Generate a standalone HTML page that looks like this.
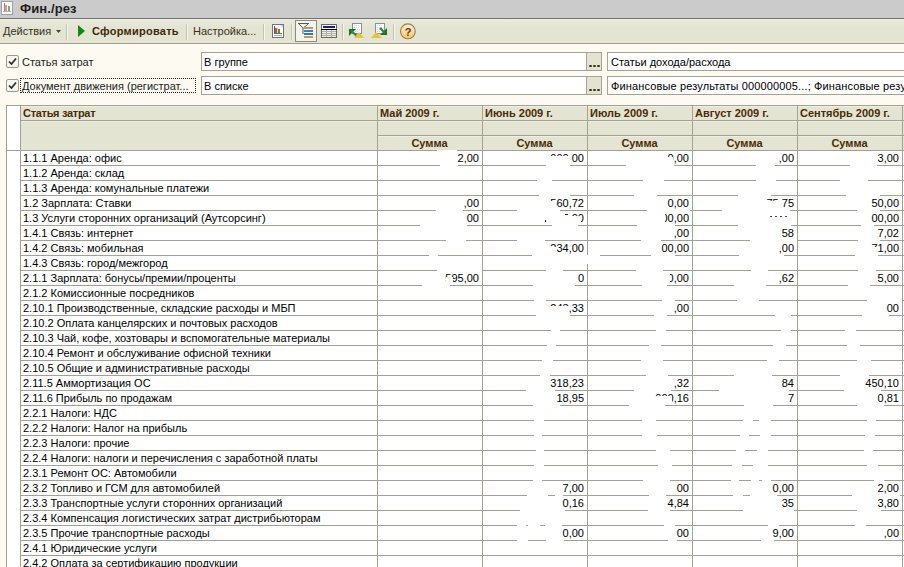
<!DOCTYPE html>
<html><head><meta charset="utf-8"><style>
*{margin:0;padding:0;box-sizing:border-box}
html,body{width:904px;height:567px;overflow:hidden;background:#fcfaf1;font-family:"Liberation Sans",sans-serif;font-size:11px;color:#000}
.a{position:absolute}
.t{position:absolute;white-space:nowrap;line-height:15px}
.hl{position:absolute;height:1px;background:#a3a294}
.vl{position:absolute;width:1px;background:#a3a294}
.hd{font-weight:bold;color:#4a2c06}
</style></head><body>

<div class="a" style="left:0;top:0;width:904px;height:18px;background:#cbcbcb"></div>
<div class="a" style="left:0;top:18px;width:904px;height:1px;background:#74746c"></div>
<svg class="a" style="left:0;top:0" width="16" height="17" viewBox="0 0 16 17"><rect x="1.5" y="1.5" width="11" height="13" fill="#f6fbf8" stroke="#98a4ac"/><rect x="4" y="3" width="1" height="8" fill="#b87878"/><rect x="5" y="5" width="2" height="6" fill="#e09898"/><rect x="8" y="6" width="2" height="5" fill="#70b080"/><rect x="3" y="11" width="8" height="1" fill="#d0a0a0"/></svg>
<div class="t" style="left:20px;top:1px;font-weight:bold;font-size:13px;color:#1e1e1e;letter-spacing:0.1px">Фин./рез</div>
<div class="a" style="left:0;top:19px;width:904px;height:24px;background:linear-gradient(#eaeade,#e4e4d3 35%,#e4e4d3 80%,#e8e5d5)"></div>
<div class="a" style="left:0;top:19px;width:904px;height:1px;background:#ecece0"></div>
<div class="a" style="left:0;top:43px;width:904px;height:1px;background:#9e9c8c"></div>
<div class="t" style="left:3px;top:24px;color:#3a3018">Действия</div>
<svg class="a" style="left:56px;top:30px" width="5" height="3"><path d="M0 0H5L2.5 3Z" fill="#4a4030"/></svg>
<div class="a" style="left:66px;top:24px;width:1px;height:16px;background:#c4c2b0"></div>
<div class="a" style="left:67px;top:24px;width:1px;height:16px;background:#f6f6ee"></div>
<div class="a" style="left:186px;top:24px;width:1px;height:16px;background:#c4c2b0"></div>
<div class="a" style="left:187px;top:24px;width:1px;height:16px;background:#f6f6ee"></div>
<div class="a" style="left:263px;top:24px;width:1px;height:16px;background:#c4c2b0"></div>
<div class="a" style="left:264px;top:24px;width:1px;height:16px;background:#f6f6ee"></div>
<div class="a" style="left:291px;top:24px;width:1px;height:16px;background:#c4c2b0"></div>
<div class="a" style="left:292px;top:24px;width:1px;height:16px;background:#f6f6ee"></div>
<div class="a" style="left:342px;top:24px;width:1px;height:16px;background:#c4c2b0"></div>
<div class="a" style="left:343px;top:24px;width:1px;height:16px;background:#f6f6ee"></div>
<div class="a" style="left:393px;top:24px;width:1px;height:16px;background:#c4c2b0"></div>
<div class="a" style="left:394px;top:24px;width:1px;height:16px;background:#f6f6ee"></div>
<svg class="a" style="left:78px;top:25px" width="7" height="12"><path d="M0 0L7 6L0 12Z" fill="#0e8a10"/></svg>
<div class="t" style="left:92px;top:24px;font-weight:bold;color:#3e2a08;letter-spacing:0.25px">Сформировать</div>
<div class="t" style="left:193px;top:24px;color:#3a3018">Настройка...</div>
<svg class="a" style="left:272px;top:24px" width="12" height="14"><rect x="0.5" y="0.5" width="11" height="13" fill="#fdfdfd" stroke="#74747a"/><path d="M8 1H11V4Z" fill="#c8d8e8"/><rect x="2" y="2" width="1" height="8" fill="#5a5a5a"/><rect x="2" y="9" width="8" height="1" fill="#6a6a6a"/><rect x="3" y="4" width="2" height="5" fill="#d84848"/><rect x="5" y="4" width="1" height="5" fill="#f4d0b0"/><rect x="6" y="5" width="2" height="4" fill="#38a048"/><rect x="2" y="11" width="8" height="1" fill="#a8b0b8"/></svg>
<div class="a" style="left:295px;top:20px;width:22px;height:22px;border:1px solid #8c8c80;background:#f4f3ec"></div>
<svg class="a" style="left:298px;top:23px" width="16" height="16"><path d="M0 0.5H11M0.5 0.5L5 5V11M10.5 0.5L5.5 5" fill="none" stroke="#5a5a5a"/><rect x="6" y="4" width="9" height="2" fill="#d09060"/><rect x="6" y="7" width="9" height="2" fill="#2a88c0"/><rect x="6" y="10" width="9" height="2" fill="#2a80b8"/><rect x="6" y="13" width="9" height="2" fill="#d09060"/></svg>
<svg class="a" style="left:321px;top:24px" width="16" height="14"><rect x="0.5" y="0.5" width="15" height="13" fill="#eeeee6" stroke="#6a6a60"/><rect x="1" y="1" width="14" height="4" fill="#f4f4ff"/><rect x="2" y="2" width="12" height="2" fill="#20207a"/><rect x="0" y="5" width="16" height="1" fill="#000"/><path d="M1 7.5H15M1 9.5H15M1 11.5H15M5.5 6V13M10.5 6V13" stroke="#b0b0a4"/></svg>
<svg class="a" style="left:348px;top:23px" width="18" height="16"><rect x="4.5" y="0.5" width="9" height="10" fill="#fff" stroke="#8a9098"/><path d="M6 2.5h6M6 4.5h6M7 6.5h5M7 8.5h4" stroke="#d4d8e0" stroke-dasharray="1 1"/><path d="M1 6H8L1 13Z" fill="#1e6e2a"/><path d="M3 8L9 13" stroke="#2a8a34" stroke-width="2.2"/><path d="M6 15L11 9L16 15Z" fill="#e4c438"/></svg>
<svg class="a" style="left:371px;top:23px" width="18" height="16"><rect x="4.5" y="0.5" width="9" height="10" fill="#fff" stroke="#8a9098"/><path d="M6 2.5h6M6 4.5h6M6 6.5h4M6 8.5h3" stroke="#d4d8e0" stroke-dasharray="1 1"/><path d="M16 5V12H9Z" fill="#1e6e2a"/><path d="M9 5L14 10" stroke="#2a8a34" stroke-width="2.2"/><path d="M0 15L5 9L11 15Z" fill="#e4c438"/></svg>
<svg class="a" style="left:399px;top:23px" width="18" height="17"><defs><linearGradient id="hg" x1="0" y1="0" x2="0" y2="1"><stop offset="0" stop-color="#f8eedc"/><stop offset="1" stop-color="#eecc66"/></linearGradient></defs><circle cx="8.9" cy="8.3" r="7.4" fill="url(#hg)" stroke="#9a7a48" stroke-width="1.1"/><text x="9" y="12.6" font-family="Liberation Sans" font-weight="bold" font-size="11" text-anchor="middle" fill="#7a2a18">?</text></svg>
<div class="a" style="left:6px;top:55px;width:13px;height:13px;border:1px solid #9a9a8a;background:#f7f6ee;border-radius:2px"></div>
<svg class="a" style="left:6px;top:55px" width="13" height="13"><path d="M3 6.5L5.5 9L10 3.5" fill="none" stroke="#2a2a2a" stroke-width="1.7"/></svg>
<div class="t" style="left:22px;top:55px;color:#222">Статья затрат</div>
<div class="a" style="left:201px;top:52px;width:386px;height:19px;border:1px solid #a4a396;background:#fff"></div>
<div class="t" style="left:204px;top:55px">В группе</div>
<div class="a" style="left:586px;top:52px;width:16px;height:19px;border:1px solid #a4a396;background:#e4e3d2"></div>
<div class="a" style="left:589px;top:65px;width:3px;height:2px;border-radius:1px;background:#3a3418"></div>
<div class="a" style="left:593px;top:65px;width:3px;height:2px;border-radius:1px;background:#3a3418"></div>
<div class="a" style="left:597px;top:65px;width:3px;height:2px;border-radius:1px;background:#3a3418"></div>
<div class="a" style="left:607px;top:52px;width:300px;height:19px;border:1px solid #a4a396;background:#fff"></div>
<div class="t" style="left:611px;top:55px;letter-spacing:0px">Статьи дохода/расхода</div>
<div class="a" style="left:6px;top:79px;width:13px;height:13px;border:1px solid #9a9a8a;background:#f7f6ee;border-radius:2px"></div>
<svg class="a" style="left:6px;top:79px" width="13" height="13"><path d="M3 6.5L5.5 9L10 3.5" fill="none" stroke="#2a2a2a" stroke-width="1.7"/></svg>
<div class="t" style="left:22px;top:79px;color:#222">Документ движения (регистрат...</div>
<div class="a" style="left:201px;top:76px;width:386px;height:19px;border:1px solid #a4a396;background:#fff"></div>
<div class="t" style="left:204px;top:79px">В списке</div>
<div class="a" style="left:586px;top:76px;width:16px;height:19px;border:1px solid #a4a396;background:#e4e3d2"></div>
<div class="a" style="left:589px;top:89px;width:3px;height:2px;border-radius:1px;background:#3a3418"></div>
<div class="a" style="left:593px;top:89px;width:3px;height:2px;border-radius:1px;background:#3a3418"></div>
<div class="a" style="left:597px;top:89px;width:3px;height:2px;border-radius:1px;background:#3a3418"></div>
<div class="a" style="left:607px;top:76px;width:300px;height:19px;border:1px solid #a4a396;background:#fff"></div>
<div class="t" style="left:611px;top:79px;letter-spacing:0.14px">Финансовые результаты 000000005...; Финансовые резу</div>
<div class="a" style="left:20px;top:78px;width:176px;height:15px;border:1px dotted #222"></div>
<div class="a" style="left:20px;top:105px;width:884px;height:45px;background:#e4e4d2"></div>
<div class="a" style="left:6px;top:105px;width:14px;height:462px;background:#fff"></div>
<div class="a" style="left:20px;top:150px;width:884px;height:417px;background:#fff"></div>
<div class="a" style="left:20px;top:106px;width:884px;height:1px;background:#eeeee2"></div>
<div class="a" style="left:20px;top:121px;width:884px;height:1px;background:#eeeee2"></div>
<div class="a" style="left:377px;top:136px;width:527px;height:1px;background:#eeeee2"></div>
<div class="hl" style="left:6px;top:105px;width:898px"></div>
<div class="hl" style="left:20px;top:120px;width:884px"></div>
<div class="hl" style="left:377px;top:135px;width:527px"></div>
<div class="hl" style="left:6px;top:150px;width:898px"></div>
<div class="hl" style="left:20px;top:165px;width:884px"></div>
<div class="hl" style="left:20px;top:180px;width:884px"></div>
<div class="hl" style="left:20px;top:195px;width:884px"></div>
<div class="hl" style="left:20px;top:210px;width:884px"></div>
<div class="hl" style="left:20px;top:225px;width:884px"></div>
<div class="hl" style="left:20px;top:240px;width:884px"></div>
<div class="hl" style="left:20px;top:255px;width:884px"></div>
<div class="hl" style="left:20px;top:270px;width:884px"></div>
<div class="hl" style="left:20px;top:285px;width:884px"></div>
<div class="hl" style="left:20px;top:300px;width:884px"></div>
<div class="hl" style="left:20px;top:315px;width:884px"></div>
<div class="hl" style="left:20px;top:330px;width:884px"></div>
<div class="hl" style="left:20px;top:345px;width:884px"></div>
<div class="hl" style="left:20px;top:360px;width:884px"></div>
<div class="hl" style="left:20px;top:375px;width:884px"></div>
<div class="hl" style="left:20px;top:390px;width:884px"></div>
<div class="hl" style="left:20px;top:405px;width:884px"></div>
<div class="hl" style="left:20px;top:420px;width:884px"></div>
<div class="hl" style="left:20px;top:435px;width:884px"></div>
<div class="hl" style="left:20px;top:450px;width:884px"></div>
<div class="hl" style="left:20px;top:465px;width:884px"></div>
<div class="hl" style="left:20px;top:480px;width:884px"></div>
<div class="hl" style="left:20px;top:495px;width:884px"></div>
<div class="hl" style="left:20px;top:510px;width:884px"></div>
<div class="hl" style="left:20px;top:525px;width:884px"></div>
<div class="hl" style="left:20px;top:540px;width:884px"></div>
<div class="hl" style="left:20px;top:555px;width:884px"></div>
<div class="hl" style="left:20px;top:570px;width:884px"></div>
<div class="a" style="left:437px;top:150px;width:20px;height:1px;background:#fff"></div>
<div class="a" style="left:440px;top:165px;width:18px;height:1px;background:#fff"></div>
<div class="a" style="left:546px;top:165px;width:24px;height:1px;background:#fff"></div>
<div class="a" style="left:626px;top:165px;width:48px;height:1px;background:#fff"></div>
<div class="a" style="left:756px;top:165px;width:19px;height:1px;background:#fff"></div>
<div class="a" style="left:850px;top:165px;width:27px;height:1px;background:#fff"></div>
<div class="a" style="left:537px;top:180px;width:15px;height:1px;background:#fff"></div>
<div class="a" style="left:643px;top:180px;width:21px;height:1px;background:#fff"></div>
<div class="a" style="left:756px;top:180px;width:20px;height:1px;background:#fff"></div>
<div class="a" style="left:840px;top:180px;width:28px;height:1px;background:#fff"></div>
<div class="a" style="left:539px;top:195px;width:31px;height:1px;background:#fff"></div>
<div class="a" style="left:634px;top:195px;width:23px;height:1px;background:#fff"></div>
<div class="a" style="left:738px;top:195px;width:33px;height:1px;background:#fff"></div>
<div class="a" style="left:846px;top:195px;width:34px;height:1px;background:#fff"></div>
<div class="a" style="left:436px;top:210px;width:27px;height:1px;background:#fff"></div>
<div class="a" style="left:517px;top:210px;width:43px;height:1px;background:#fff"></div>
<div class="a" style="left:647px;top:210px;width:43px;height:1px;background:#fff"></div>
<div class="a" style="left:722px;top:210px;width:68px;height:1px;background:#fff"></div>
<div class="a" style="left:857px;top:210px;width:23px;height:1px;background:#fff"></div>
<div class="a" style="left:420px;top:225px;width:47px;height:1px;background:#fff"></div>
<div class="a" style="left:552px;top:225px;width:26px;height:1px;background:#fff"></div>
<div class="a" style="left:637px;top:225px;width:38px;height:1px;background:#fff"></div>
<div class="a" style="left:738px;top:225px;width:53px;height:1px;background:#fff"></div>
<div class="a" style="left:861px;top:225px;width:13px;height:1px;background:#fff"></div>
<div class="a" style="left:446px;top:240px;width:20px;height:1px;background:#fff"></div>
<div class="a" style="left:517px;top:240px;width:28px;height:1px;background:#fff"></div>
<div class="a" style="left:641px;top:240px;width:20px;height:1px;background:#fff"></div>
<div class="a" style="left:750px;top:240px;width:47px;height:1px;background:#fff"></div>
<div class="a" style="left:858px;top:240px;width:22px;height:1px;background:#fff"></div>
<div class="a" style="left:429px;top:255px;width:9px;height:1px;background:#fff"></div>
<div class="a" style="left:532px;top:255px;width:68px;height:1px;background:#fff"></div>
<div class="a" style="left:651px;top:255px;width:24px;height:1px;background:#fff"></div>
<div class="a" style="left:739px;top:255px;width:45px;height:1px;background:#fff"></div>
<div class="a" style="left:855px;top:255px;width:23px;height:1px;background:#fff"></div>
<div class="a" style="left:437px;top:270px;width:45px;height:1px;background:#fff"></div>
<div class="a" style="left:546px;top:270px;width:17px;height:1px;background:#fff"></div>
<div class="a" style="left:636px;top:270px;width:27px;height:1px;background:#fff"></div>
<div class="a" style="left:751px;top:270px;width:17px;height:1px;background:#fff"></div>
<div class="a" style="left:858px;top:270px;width:18px;height:1px;background:#fff"></div>
<div class="a" style="left:422px;top:285px;width:28px;height:1px;background:#fff"></div>
<div class="a" style="left:533px;top:285px;width:42px;height:1px;background:#fff"></div>
<div class="a" style="left:642px;top:285px;width:25px;height:1px;background:#fff"></div>
<div class="a" style="left:734px;top:285px;width:32px;height:1px;background:#fff"></div>
<div class="a" style="left:848px;top:285px;width:22px;height:1px;background:#fff"></div>
<div class="a" style="left:534px;top:300px;width:12px;height:1px;background:#fff"></div>
<div class="a" style="left:662px;top:300px;width:13px;height:1px;background:#fff"></div>
<div class="a" style="left:737px;top:300px;width:22px;height:1px;background:#fff"></div>
<div class="a" style="left:867px;top:300px;width:35px;height:1px;background:#fff"></div>
<div class="a" style="left:536px;top:315px;width:34px;height:1px;background:#fff"></div>
<div class="a" style="left:654px;top:315px;width:13px;height:1px;background:#fff"></div>
<div class="a" style="left:775px;top:315px;width:16px;height:1px;background:#fff"></div>
<div class="a" style="left:862px;top:315px;width:27px;height:1px;background:#fff"></div>
<div class="a" style="left:551px;top:330px;width:9px;height:1px;background:#fff"></div>
<div class="a" style="left:656px;top:330px;width:10px;height:1px;background:#fff"></div>
<div class="a" style="left:781px;top:330px;width:10px;height:1px;background:#fff"></div>
<div class="a" style="left:845px;top:330px;width:11px;height:1px;background:#fff"></div>
<div class="a" style="left:547px;top:345px;width:9px;height:1px;background:#fff"></div>
<div class="a" style="left:649px;top:345px;width:12px;height:1px;background:#fff"></div>
<div class="a" style="left:773px;top:345px;width:13px;height:1px;background:#fff"></div>
<div class="a" style="left:847px;top:345px;width:13px;height:1px;background:#fff"></div>
<div class="a" style="left:542px;top:360px;width:11px;height:1px;background:#fff"></div>
<div class="a" style="left:641px;top:360px;width:22px;height:1px;background:#fff"></div>
<div class="a" style="left:767px;top:360px;width:12px;height:1px;background:#fff"></div>
<div class="a" style="left:857px;top:360px;width:14px;height:1px;background:#fff"></div>
<div class="a" style="left:540px;top:375px;width:10px;height:1px;background:#fff"></div>
<div class="a" style="left:646px;top:375px;width:22px;height:1px;background:#fff"></div>
<div class="a" style="left:734px;top:375px;width:38px;height:1px;background:#fff"></div>
<div class="a" style="left:840px;top:375px;width:29px;height:1px;background:#fff"></div>
<div class="a" style="left:526px;top:390px;width:29px;height:1px;background:#fff"></div>
<div class="a" style="left:634px;top:390px;width:37px;height:1px;background:#fff"></div>
<div class="a" style="left:719px;top:390px;width:70px;height:1px;background:#fff"></div>
<div class="a" style="left:844px;top:390px;width:37px;height:1px;background:#fff"></div>
<div class="a" style="left:533px;top:405px;width:27px;height:1px;background:#fff"></div>
<div class="a" style="left:629px;top:405px;width:36px;height:1px;background:#fff"></div>
<div class="a" style="left:744px;top:405px;width:29px;height:1px;background:#fff"></div>
<div class="a" style="left:857px;top:405px;width:27px;height:1px;background:#fff"></div>
<div class="a" style="left:534px;top:420px;width:10px;height:1px;background:#fff"></div>
<div class="a" style="left:642px;top:420px;width:14px;height:1px;background:#fff"></div>
<div class="a" style="left:743px;top:420px;width:10px;height:1px;background:#fff"></div>
<div class="a" style="left:759px;top:420px;width:12px;height:1px;background:#fff"></div>
<div class="a" style="left:867px;top:420px;width:9px;height:1px;background:#fff"></div>
<div class="a" style="left:534px;top:435px;width:8px;height:1px;background:#fff"></div>
<div class="a" style="left:642px;top:435px;width:15px;height:1px;background:#fff"></div>
<div class="a" style="left:740px;top:435px;width:9px;height:1px;background:#fff"></div>
<div class="a" style="left:760px;top:435px;width:11px;height:1px;background:#fff"></div>
<div class="a" style="left:865px;top:435px;width:10px;height:1px;background:#fff"></div>
<div class="a" style="left:536px;top:450px;width:8px;height:1px;background:#fff"></div>
<div class="a" style="left:656px;top:450px;width:14px;height:1px;background:#fff"></div>
<div class="a" style="left:736px;top:450px;width:9px;height:1px;background:#fff"></div>
<div class="a" style="left:757px;top:450px;width:11px;height:1px;background:#fff"></div>
<div class="a" style="left:864px;top:450px;width:9px;height:1px;background:#fff"></div>
<div class="a" style="left:534px;top:465px;width:10px;height:1px;background:#fff"></div>
<div class="a" style="left:658px;top:465px;width:14px;height:1px;background:#fff"></div>
<div class="a" style="left:732px;top:465px;width:10px;height:1px;background:#fff"></div>
<div class="a" style="left:753px;top:465px;width:15px;height:1px;background:#fff"></div>
<div class="a" style="left:867px;top:465px;width:11px;height:1px;background:#fff"></div>
<div class="a" style="left:533px;top:480px;width:9px;height:1px;background:#fff"></div>
<div class="a" style="left:643px;top:480px;width:27px;height:1px;background:#fff"></div>
<div class="a" style="left:731px;top:480px;width:8px;height:1px;background:#fff"></div>
<div class="a" style="left:751px;top:480px;width:8px;height:1px;background:#fff"></div>
<div class="a" style="left:762px;top:480px;width:9px;height:1px;background:#fff"></div>
<div class="a" style="left:874px;top:480px;width:10px;height:1px;background:#fff"></div>
<div class="a" style="left:527px;top:495px;width:21px;height:1px;background:#fff"></div>
<div class="a" style="left:555px;top:495px;width:8px;height:1px;background:#fff"></div>
<div class="a" style="left:649px;top:495px;width:17px;height:1px;background:#fff"></div>
<div class="a" style="left:733px;top:495px;width:10px;height:1px;background:#fff"></div>
<div class="a" style="left:750px;top:495px;width:27px;height:1px;background:#fff"></div>
<div class="a" style="left:852px;top:495px;width:48px;height:1px;background:#fff"></div>
<div class="a" style="left:520px;top:510px;width:45px;height:1px;background:#fff"></div>
<div class="a" style="left:648px;top:510px;width:22px;height:1px;background:#fff"></div>
<div class="a" style="left:743px;top:510px;width:51px;height:1px;background:#fff"></div>
<div class="a" style="left:857px;top:510px;width:24px;height:1px;background:#fff"></div>
<div class="a" style="left:517px;top:525px;width:9px;height:1px;background:#fff"></div>
<div class="a" style="left:528px;top:525px;width:12px;height:1px;background:#fff"></div>
<div class="a" style="left:545px;top:525px;width:17px;height:1px;background:#fff"></div>
<div class="a" style="left:664px;top:525px;width:11px;height:1px;background:#fff"></div>
<div class="a" style="left:768px;top:525px;width:11px;height:1px;background:#fff"></div>
<div class="a" style="left:855px;top:525px;width:11px;height:1px;background:#fff"></div>
<div class="a" style="left:517px;top:540px;width:11px;height:1px;background:#fff"></div>
<div class="a" style="left:546px;top:540px;width:18px;height:1px;background:#fff"></div>
<div class="a" style="left:668px;top:540px;width:9px;height:1px;background:#fff"></div>
<div class="a" style="left:761px;top:540px;width:13px;height:1px;background:#fff"></div>
<div class="vl" style="left:6px;top:105px;height:462px"></div>
<div class="vl" style="left:20px;top:105px;height:462px"></div>
<div class="vl" style="left:377px;top:105px;height:462px"></div>
<div class="vl" style="left:482px;top:105px;height:462px"></div>
<div class="vl" style="left:587px;top:105px;height:462px"></div>
<div class="vl" style="left:692px;top:105px;height:462px"></div>
<div class="vl" style="left:797px;top:105px;height:462px"></div>
<div class="vl" style="left:902px;top:105px;height:462px"></div>
<div class="a" style="left:587px;top:255px;width:1px;height:9px;background:#fff"></div>
<div class="t hd" style="left:23px;top:106px;letter-spacing:-0.3px">Статья затрат</div>
<div class="t hd" style="left:380px;top:106px">Май 2009 г.</div>
<div class="t hd" style="left:377px;top:136px;width:105px;text-align:center">Сумма</div>
<div class="t hd" style="left:485px;top:106px">Июнь 2009 г.</div>
<div class="t hd" style="left:482px;top:136px;width:105px;text-align:center">Сумма</div>
<div class="t hd" style="left:590px;top:106px">Июль 2009 г.</div>
<div class="t hd" style="left:587px;top:136px;width:105px;text-align:center">Сумма</div>
<div class="t hd" style="left:695px;top:106px">Август 2009 г.</div>
<div class="t hd" style="left:692px;top:136px;width:105px;text-align:center">Сумма</div>
<div class="t hd" style="left:800px;top:106px">Сентябрь 2009 г.</div>
<div class="t hd" style="left:797px;top:136px;width:105px;text-align:center">Сумма</div>
<div class="t" style="left:23px;top:151px">1.1.1 Аренда: офис</div>
<div class="t" style="left:377px;top:151px;width:102px;text-align:right">2,00</div>
<div class="t" style="left:482px;top:151px;width:102px;text-align:right">000,00</div>
<div class="t" style="left:587px;top:151px;width:102px;text-align:right">0,00</div>
<div class="t" style="left:692px;top:151px;width:102px;text-align:right">,00</div>
<div class="t" style="left:797px;top:151px;width:102px;text-align:right">3,00</div>
<div class="t" style="left:23px;top:166px">1.1.2 Аренда: склад</div>
<div class="t" style="left:23px;top:181px">1.1.3 Аренда: комунальные платежи</div>
<div class="t" style="left:23px;top:196px">1.2 Зарплата: Ставки</div>
<div class="t" style="left:377px;top:196px;width:102px;text-align:right">,00</div>
<div class="t" style="left:482px;top:196px;width:102px;text-align:right">560,72</div>
<div class="t" style="left:587px;top:196px;width:102px;text-align:right">0,00</div>
<div class="t" style="left:692px;top:196px;width:102px;text-align:right">75,75</div>
<div class="t" style="left:797px;top:196px;width:102px;text-align:right">50,00</div>
<div class="t" style="left:23px;top:211px">1.3 Услуги сторонних организаций (Аутсорсинг)</div>
<div class="t" style="left:377px;top:211px;width:102px;text-align:right">00</div>
<div class="t" style="left:482px;top:211px;width:102px;text-align:right">00</div>
<div class="t" style="left:587px;top:211px;width:102px;text-align:right">00,00</div>
<div class="t" style="left:797px;top:211px;width:102px;text-align:right">00,00</div>
<div class="t" style="left:23px;top:226px">1.4.1 Связь: интернет</div>
<div class="t" style="left:587px;top:226px;width:102px;text-align:right">,00</div>
<div class="t" style="left:692px;top:226px;width:102px;text-align:right">58</div>
<div class="t" style="left:797px;top:226px;width:102px;text-align:right">7,02</div>
<div class="t" style="left:23px;top:241px">1.4.2 Связь: мобильная</div>
<div class="t" style="left:482px;top:241px;width:102px;text-align:right">234,00</div>
<div class="t" style="left:587px;top:241px;width:102px;text-align:right">00,00</div>
<div class="t" style="left:692px;top:241px;width:102px;text-align:right">,00</div>
<div class="t" style="left:797px;top:241px;width:102px;text-align:right">71,00</div>
<div class="t" style="left:23px;top:256px">1.4.3 Связь: город/межгород</div>
<div class="t" style="left:23px;top:271px">2.1.1 Зарплата: бонусы/премии/проценты</div>
<div class="t" style="left:377px;top:271px;width:102px;text-align:right">595,00</div>
<div class="t" style="left:482px;top:271px;width:102px;text-align:right">0</div>
<div class="t" style="left:587px;top:271px;width:102px;text-align:right">0,00</div>
<div class="t" style="left:692px;top:271px;width:102px;text-align:right">,62</div>
<div class="t" style="left:797px;top:271px;width:102px;text-align:right">5,00</div>
<div class="t" style="left:23px;top:286px">2.1.2 Комиссионные посредников</div>
<div class="t" style="left:23px;top:301px">2.10.1 Производственные, складские расходы и МБП</div>
<div class="t" style="left:482px;top:301px;width:102px;text-align:right">243,33</div>
<div class="t" style="left:587px;top:301px;width:102px;text-align:right">,00</div>
<div class="t" style="left:797px;top:301px;width:102px;text-align:right">00</div>
<div class="t" style="left:23px;top:316px">2.10.2 Оплата канцелярских и почтовых расходов</div>
<div class="t" style="left:23px;top:331px">2.10.3 Чай, кофе, хозтовары и вспомогательные материалы</div>
<div class="t" style="left:23px;top:346px">2.10.4 Ремонт и обслуживание офисной техники</div>
<div class="t" style="left:23px;top:361px">2.10.5 Общие и административные расходы</div>
<div class="t" style="left:23px;top:376px">2.11.5 Аммортизация ОС</div>
<div class="t" style="left:482px;top:376px;width:102px;text-align:right">318,23</div>
<div class="t" style="left:587px;top:376px;width:102px;text-align:right">,32</div>
<div class="t" style="left:692px;top:376px;width:102px;text-align:right">84</div>
<div class="t" style="left:797px;top:376px;width:102px;text-align:right">450,10</div>
<div class="t" style="left:23px;top:391px">2.11.6 Прибыль по продажам</div>
<div class="t" style="left:482px;top:391px;width:102px;text-align:right">18,95</div>
<div class="t" style="left:587px;top:391px;width:102px;text-align:right">000,16</div>
<div class="t" style="left:692px;top:391px;width:102px;text-align:right">7</div>
<div class="t" style="left:797px;top:391px;width:102px;text-align:right">0,81</div>
<div class="t" style="left:23px;top:406px">2.2.1 Налоги: НДС</div>
<div class="t" style="left:23px;top:421px">2.2.2 Налоги: Налог на прибыль</div>
<div class="t" style="left:23px;top:436px">2.2.3 Налоги: прочие</div>
<div class="t" style="left:23px;top:451px">2.2.4 Налоги: налоги и перечисления с заработной платы</div>
<div class="t" style="left:23px;top:466px">2.3.1 Ремонт ОС: Автомобили</div>
<div class="t" style="left:23px;top:481px">2.3.2 Топливо и ГСМ для автомобилей</div>
<div class="t" style="left:482px;top:481px;width:102px;text-align:right">7,00</div>
<div class="t" style="left:587px;top:481px;width:102px;text-align:right">00</div>
<div class="t" style="left:692px;top:481px;width:102px;text-align:right">0,00</div>
<div class="t" style="left:797px;top:481px;width:102px;text-align:right">2,00</div>
<div class="t" style="left:23px;top:496px">2.3.3 Транспортные услуги сторонних организаций</div>
<div class="t" style="left:482px;top:496px;width:102px;text-align:right">0,16</div>
<div class="t" style="left:587px;top:496px;width:102px;text-align:right">4,84</div>
<div class="t" style="left:692px;top:496px;width:102px;text-align:right">35</div>
<div class="t" style="left:797px;top:496px;width:102px;text-align:right">3,80</div>
<div class="t" style="left:23px;top:511px">2.3.4 Компенсация логистических затрат дистрибьюторам</div>
<div class="t" style="left:23px;top:526px">2.3.5 Прочие транспортные расходы</div>
<div class="t" style="left:482px;top:526px;width:102px;text-align:right">0,00</div>
<div class="t" style="left:587px;top:526px;width:102px;text-align:right">00</div>
<div class="t" style="left:692px;top:526px;width:102px;text-align:right">9,00</div>
<div class="t" style="left:797px;top:526px;width:102px;text-align:right">,00</div>
<div class="t" style="left:23px;top:541px">2.4.1 Юридические услуги</div>
<div class="t" style="left:23px;top:556px">2.4.2 Оплата за сертификацию продукции</div>
<div class="a" style="left:571px;top:216px;width:10px;height:7px;background:#fff"></div>
<div class="a" style="left:766px;top:201px;width:16px;height:9px;background:#fff"></div>
<div class="a" style="left:548px;top:156px;width:23px;height:9px;background:#fff"></div>
<div class="a" style="left:546px;top:201px;width:10px;height:9px;background:#fff"></div>
<div class="a" style="left:549px;top:247px;width:8px;height:7px;background:#fff"></div>
<div class="a" style="left:446px;top:277px;width:7px;height:7px;background:#fff"></div>
<div class="a" style="left:548px;top:306px;width:21px;height:8px;background:#fff"></div>
<div class="a" style="left:648px;top:396px;width:24px;height:9px;background:#fff"></div>
<div class="a" style="left:868px;top:247px;width:9px;height:7px;background:#fff"></div>
<div class="a" style="left:664px;top:157px;width:9px;height:7px;background:#fff"></div>
<div class="a" style="left:664px;top:273px;width:6px;height:10px;background:#fff"></div>
<div class="a" style="left:659px;top:213px;width:6px;height:10px;background:#fff"></div>
<div class="a" style="left:545px;top:220px;width:1px;height:2px;background:#222"></div>
<div class="a" style="left:565px;top:214px;width:3px;height:1px;background:#222"></div>
<div class="a" style="left:770px;top:216px;width:2px;height:1px;background:#444"></div>
<div class="a" style="left:775px;top:216px;width:2px;height:1px;background:#444"></div>
<div class="a" style="left:780px;top:216px;width:2px;height:1px;background:#444"></div>
<div class="a" style="left:785px;top:216px;width:2px;height:1px;background:#444"></div>
</body></html>
